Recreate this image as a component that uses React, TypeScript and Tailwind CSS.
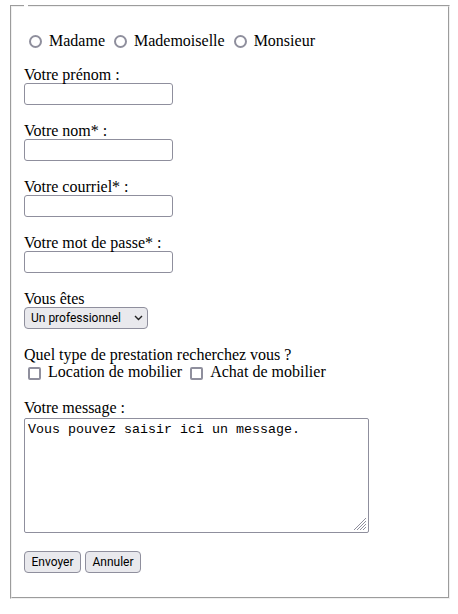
const inputCls =
  "block w-[149px] h-[22px] border border-[#8f8f9d] rounded-[3px] bg-white px-[3px] text-[13px] font-['Roboto',sans-serif]";
const labelCls = "block h-[17px] leading-[17px] whitespace-nowrap";
const radioCls =
  "appearance-none shrink-0 w-[13px] h-[13px] mt-[3px] ml-[5px] mr-[3px] rounded-full border-2 border-[#8f8f9d] bg-white";
const checkCls =
  "appearance-none shrink-0 w-[13px] h-[13px] mt-[4px] ml-[4px] mr-[3px] rounded-[2px] border-2 border-[#8f8f9d] bg-white";
const btnCls =
  "h-[22px] border border-[#8f8f9d] rounded-[4px] bg-[#e9e9ed] text-[12px] leading-[20px] text-black font-['Roboto',sans-serif]";

const App = () => {
  return (
    <div className="min-h-screen bg-white pt-[5px] pl-[10px] pr-[8px] font-['Liberation_Serif','Times_New_Roman',serif] text-[16px] text-black">
      <form>
        <fieldset className="border-2 border-[#f0f0f0] [border-style:groove] px-[12px] pt-[25px] pb-[24px]">
          <legend className="px-[2px]"></legend>

          {/* civilité */}
          <div className="flex items-start h-[18px] leading-[18px] whitespace-nowrap">
            <label className="flex items-start">
              <input type="radio" name="civilite" className={radioCls} />
              <span className="px-[4px]">Madame</span>
            </label>
            <label className="flex items-start">
              <input type="radio" name="civilite" className={radioCls} />
              <span className="px-[4px]">Mademoiselle</span>
            </label>
            <label className="flex items-start">
              <input type="radio" name="civilite" className={radioCls} />
              <span className="pl-[4px]">Monsieur</span>
            </label>
          </div>

          <div className="mt-[16px]">
            <label className={labelCls}>Votre prénom :</label>
            <input type="text" className={inputCls} />
          </div>

          <div className="mt-[17px]">
            <label className={labelCls}>Votre nom* :</label>
            <input type="text" className={inputCls} />
          </div>

          <div className="mt-[17px]">
            <label className={labelCls}>Votre courriel* :</label>
            <input type="email" className={inputCls} />
          </div>

          <div className="mt-[17px]">
            <label className={labelCls}>Votre mot de passe* :</label>
            <input type="password" className={inputCls} />
          </div>

          <div className="mt-[17px]">
            <label className={labelCls}>Vous êtes</label>
            <div className="flex items-center justify-between w-[124px] h-[22px] border border-[#8f8f9d] rounded-[4px] bg-[#e9e9ed] pl-[6px] pr-[4px] text-[12px] font-['Roboto',sans-serif]">
              <span>Un professionnel</span>
              <svg width="9" height="6" viewBox="0 0 9 6" fill="none">
                <path d="M1 1 L4.5 4.5 L8 1" stroke="#222" strokeWidth="1.4" />
              </svg>
            </div>
          </div>

          <div className="mt-[17px]">
            <label className={labelCls}>Quel type de prestation recherchez vous ?</label>
            <div className="flex items-start h-[18px] leading-[18px] whitespace-nowrap">
              <label className="flex items-start">
                <input type="checkbox" className={checkCls} />
                <span className="px-[4px]">Location de mobilier</span>
              </label>
              <label className="flex items-start">
                <input type="checkbox" className={checkCls} />
                <span className="pl-[4px]">Achat de mobilier</span>
              </label>
            </div>
          </div>

          <div className="mt-[18px]">
            <label className={labelCls}>Votre message :</label>
            <div className="relative mt-[2px] w-[345px] h-[115px]">
              <textarea
                className="block w-full h-full resize-none border border-[#8f8f9d] rounded-[2px] bg-white px-[3px] pt-[3px] font-['Liberation_Mono','Courier_New',monospace] text-[13.33px] leading-[15px]"
                defaultValue="Vous pouvez saisir ici un message."
              />
              <svg
                className="absolute right-[2px] bottom-[2px]"
                width="14"
                height="14"
                viewBox="0 0 14 14"
              >
                <path
                  d="M13 1 L1 13 M13 4 L4 13 M13 7 L7 13 M13 10 L10 13"
                  stroke="#8f8f9d"
                  strokeWidth="1"
                />
              </svg>
            </div>
          </div>

          <div className="mt-[18px] flex gap-[4px]">
            <button type="submit" className={`${btnCls} w-[57px]`}>
              Envoyer
            </button>
            <button type="reset" className={`${btnCls} w-[56px]`}>
              Annuler
            </button>
          </div>
        </fieldset>
      </form>
    </div>
  );
};

export default App;
